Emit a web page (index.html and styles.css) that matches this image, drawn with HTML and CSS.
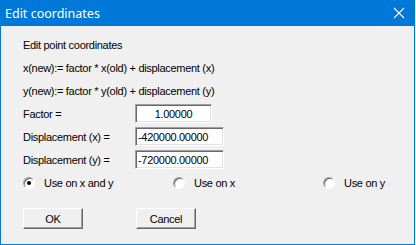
FILE: index.html
```html
<!DOCTYPE html>
<html lang="en">
<head>
    <meta charset="UTF-8">
    <title>Edit coordinates</title>
    <link rel="stylesheet" href="styles.css">
</head>
<body>
    <div class="window">
        <div class="titlebar">
            <span class="title">Edit coordinates</span>
            <svg class="close" width="12" height="12" viewBox="0 0 12 12">
                <path d="M1 1 L11 11 M11 1 L1 11" stroke="#fff" stroke-width="1.1" fill="none"/>
            </svg>
        </div>
        <div class="content">
            <div class="row">Edit point coordinates</div>
            <div class="row">x(new):= factor * x(old) + displacement (x)</div>
            <div class="row">y(new):= factor * y(old) + displacement (y)</div>
            <div class="row">
                <span class="label">Factor =</span>
                <div class="field short center">1.00000</div>
            </div>
            <div class="row">
                <span class="label">Displacement (x) =</span>
                <div class="field">-420000.00000</div>
            </div>
            <div class="row">
                <span class="label">Displacement (y) =</span>
                <div class="field">-720000.00000</div>
            </div>
            <div class="row radios">
                <label class="radio first"><span class="dot checked"></span>Use on x and y</label>
                <label class="radio second"><span class="dot"></span>Use on x</label>
                <label class="radio"><span class="dot"></span>Use on y</label>
            </div>
            <div class="buttons">
                <button class="btn">OK</button>
                <button class="btn">Cancel</button>
            </div>
        </div>
    </div>
</body>
</html>
```

FILE: styles.css
```css
*{
    margin:0;
    padding:0;
    box-sizing:border-box;
}
body{
    background:#fff;
    width:416px;
    height:245px;
    overflow:hidden;
}
.window{
    width:415px;
    height:245px;
    background:#f0f0f0;
    border-left:1px solid #0078d7;
    border-right:1px solid #0078d7;
    border-bottom:1px solid #0078d7;
    display:flex;
    flex-direction:column;
}
.titlebar{
    height:26px;
    margin-left:-1px;
    margin-right:-1px;
    background:#0078d7;
    display:flex;
    align-items:center;
    justify-content:space-between;
    padding:0 10px 0 5px;
}
.title{
    color:#fff;
    font-family:"Noto Sans", sans-serif;
    font-size:12.5px;
}
.close{
    display:block;
}
.content{
    padding:7px 0 0 22px;
    font-family:"Liberation Sans", Arial, sans-serif;
    font-size:11px;
    letter-spacing:-0.3px;
    color:#000;
}
.row{
    height:23px;
    display:flex;
    align-items:center;
}
.label{
    width:112px;
}
.field{
    width:89px;
    height:19px;
    background:#fff;
    border-top:1px solid #a0a0a0;
    border-left:1px solid #a0a0a0;
    border-right:1px solid #fff;
    border-bottom:1px solid #fff;
    box-shadow:inset 1px 1px 0 #696969, inset -1px -1px 0 #e3e3e3;
    padding:0 2px;
    display:flex;
    align-items:center;
}
.field.short{
    width:77px;
}
.center{
    justify-content:center;
}
.radio{
    display:flex;
    align-items:center;
    gap:9px;
}
.radio.first{
    width:150px;
}
.radio.second{
    width:150px;
}
.dot{
    width:12px;
    height:12px;
    border-radius:50%;
    background:#fff;
    border:1px solid;
    border-color:#a0a0a0 #fff #fff #a0a0a0;
    box-shadow:inset 1px 1px 0 #696969;
    display:flex;
    align-items:center;
    justify-content:center;
}
.dot.checked::after{
    content:"";
    width:4px;
    height:4px;
    border-radius:50%;
    background:#000;
}
.buttons{
    display:flex;
    gap:53px;
    margin-top:14px;
}
.btn{
    width:60px;
    height:21px;
    background:#f0f0f0;
    font-family:"Liberation Sans", Arial, sans-serif;
    font-size:11px;
    letter-spacing:-0.3px;
    color:#000;
    border:1px solid;
    border-color:#fff #696969 #696969 #fff;
    box-shadow:inset -1px -1px 0 #a0a0a0;
}
```
